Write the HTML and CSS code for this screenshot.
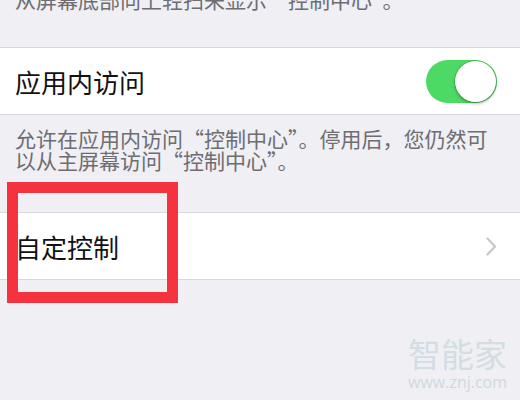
FILE: index.html
```html
<!DOCTYPE html>
<html lang="zh">
<head>
<meta charset="utf-8">
<link rel="stylesheet" href="styles.css">
</head>
<body>
<div class="page">
  <p class="note note-top">从屏幕底部向上轻扫来显示“控制中心”。</p>
  <div class="row row-first">
    <span class="label">应用内访问</span>
    <span class="toggle"><span class="knob"></span></span>
  </div>
  <p class="note note-desc">允许在应用内访问“控制中心”。停用后，您仍然可以从主屏幕访问“控制中心”。</p>
  <div class="row row-second">
    <span class="label label-custom">自定控制</span>
    <svg class="chevron" width="11" height="19" viewBox="0 0 11 19"><path d="M1.5 1.5 L9 9.5 L1.5 17.5" fill="none" stroke="#c7c7cc" stroke-width="2.2" stroke-linecap="round" stroke-linejoin="round"/></svg>
  </div>
  <div class="highlight"></div>
  <div class="watermark">
    <span class="wm-title">智能家</span>
    <span class="wm-url">www.znj.com</span>
  </div>
</div>
</body>
</html>
```
FILE: styles.css
```css
html, body {
  margin: 0;
  padding: 0;
}
body {
  background: #efeff4;
  font-family: "Noto Sans CJK SC", "Noto Sans", sans-serif;
  width: 520px;
  height: 400px;
  overflow: hidden;
}
.page {
  position: relative;
  display: flow-root;
  width: 520px;
  height: 400px;
}
.note {
  margin: 0;
  padding: 0 15px;
  font-size: 21px;
  line-height: 22px;
  color: #6d6d72;
}
.note-top {
  margin-top: -12px;
  margin-bottom: 37px;
  white-space: nowrap;
}
.row {
  background: #fff;
  border-top: 1px solid #d8d8dc;
  border-bottom: 1px solid #d8d8dc;
  display: flex;
  align-items: center;
  justify-content: space-between;
  padding: 0 23px 0 15px;
}
.row-first {
  height: 66px;
}
.row-second {
  height: 66px;
  padding-left: 15px;
}
.label {
  font-size: 26px;
  color: #111;
}
.toggle {
  width: 71px;
  height: 43px;
  border-radius: 22px;
  background: #4cd964;
  display: flex;
  align-items: center;
  justify-content: flex-end;
}
.knob {
  width: 41px;
  height: 41px;
  border-radius: 50%;
  background: #fff;
  margin-right: 1px;
  box-shadow: 0 2px 3px rgba(0,0,0,0.25), 0 0 0 1px rgba(60,130,60,0.35);
}
.note-desc {
  padding-top: 12px;
  margin-bottom: 41px;
  padding-right: 28px;
}
.chevron {
  display: block;
}
.highlight {
  position: absolute;
  left: 7px;
  top: 182px;
  width: 149px;
  height: 99px;
  border: 11px solid #f5333f;
}
.watermark {
  position: absolute;
  left: 408px;
  top: 336px;
  display: flex;
  flex-direction: column;
  align-items: center;
  color: #d3dde2;
}
.wm-title {
  font-size: 33px;
  line-height: 34px;
}
.wm-url {
  font-family: "Open Sans", "Noto Sans", sans-serif;
  font-size: 16px;
  line-height: 18px;
  margin-top: 3px;
  color: #cfdadf;
}
```
